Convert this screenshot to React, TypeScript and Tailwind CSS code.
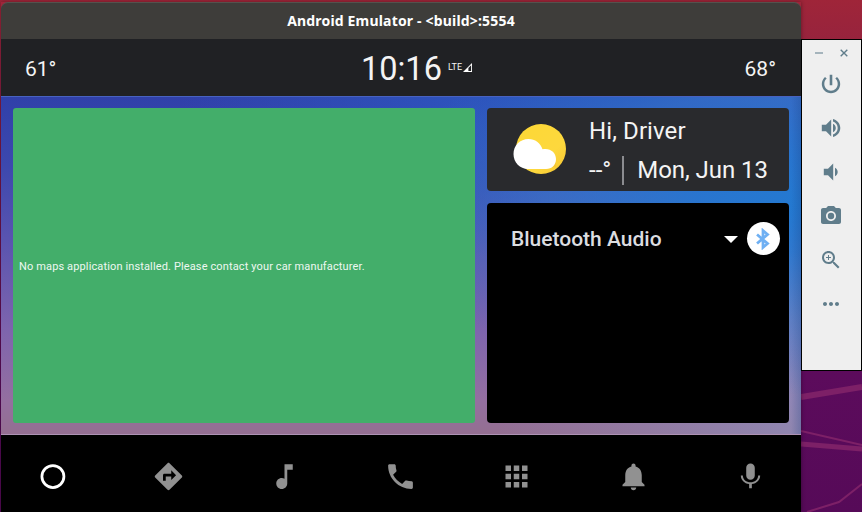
import type { ReactNode } from "react";

function Icon({ d, size = "size-[33px]", children }: { d?: string; size?: string; children?: ReactNode }) {
  return (
    <svg viewBox="0 0 24 24" fill="currentColor" className={`${size} shrink-0`}>
      {d && <path d={d} />}
      {children}
    </svg>
  );
}

const sideIcons = [
  "M13.3 2.8h-2.6v10.4h2.6V2.8zm4.7 2.1l-1.7 1.7C17.8 7.86 18.7 9.81 18.7 12c0 3.7-3 6.7-6.7 6.7s-6.7-3-6.7-6.7c0-2.19.9-4.14 2.4-5.4L6 4.9C4.06 6.6 2.8 9.26 2.8 12c0 5.08 4.12 9.2 9.2 9.2s9.2-4.12 9.2-9.2c0-2.74-1.26-5.4-3.2-7.1z",
  "M2.8 8.7v6.6h4.2l5.2 5.2V3.5L7 8.7H2.8zm14 3.3c0-1.77-1.02-3.29-2.8-4.3v8.6c1.78-1 2.8-2.5 2.8-4.3zM14 3v2.5c2.89.86 4.7 3.4 4.7 6.5s-1.81 5.64-4.7 6.5V21c4.2-1 7.3-4.6 7.3-9s-3.1-8-7.3-9z",
  "M18.7 12c0-1.77-1.02-3.29-2.7-4.2v8.4c1.68-.9 2.7-2.43 2.7-4.2zM4.8 8.8v6.4H9l5.2 5.2V3.6L9 8.8H4.8z",
  "M12 8.8a3.2 3.2 0 1 0 0 6.4 3.2 3.2 0 0 0 0-6.4zM9 2L7.17 4H4c-1.1 0-2 .9-2 2v12c0 1.1.9 2 2 2h16c1.1 0 2-.9 2-2V6c0-1.1-.9-2-2-2h-3.17L15 2H9zm3 15c-2.76 0-5-2.24-5-5s2.24-5 5-5 5 2.24 5 5-2.24 5-5 5z",
  "M15.5 14h-.79l-.28-.27C15.41 12.59 16 11.11 16 9.5 16 5.91 13.09 3 9.5 3S3 5.91 3 9.5 5.91 16 9.5 16c1.61 0 3.09-.59 4.23-1.57l.27.28v.79l5 4.99L20.49 19l-4.99-5zm-6 0C7.01 14 5 11.99 5 9.5S7.01 5 9.5 5 14 7.01 14 9.5 11.99 14 9.5 14zm2.5-5h-2V7H9v2H7v1h2v2h1v-2h2z",
  "M6 10c-1.1 0-2 .9-2 2s.9 2 2 2 2-.9 2-2-.9-2-2-2zm12 0c-1.1 0-2 .9-2 2s.9 2 2 2 2-.9 2-2-.9-2-2-2zm-6 0c-1.1 0-2 .9-2 2s.9 2 2 2 2-.9 2-2-.9-2-2-2z",
];

const navIcons = [
  "M21.71 11.29l-9-9c-.39-.39-1.02-.39-1.41 0l-9 9c-.39.39-.39 1.02 0 1.41l9 9c.39.39 1.02.39 1.41 0l9-9c.39-.38.39-1.01 0-1.41zM14 14.5V12h-4v3H8v-4c0-.55.45-1 1-1h5V7.5l3.5 3.5-3.5 3.5z",
  "M12 3v10.55c-.59-.34-1.27-.55-2-.55-2.21 0-4 1.79-4 4s1.79 4 4 4 4-1.79 4-4V7h4V3h-6z",
  "M6.62 10.79c1.44 2.83 3.76 5.14 6.59 6.59l2.2-2.2c.27-.27.67-.36 1.02-.24 1.12.37 2.33.57 3.57.57.55 0 1 .45 1 1V20c0 .55-.45 1-1 1-9.39 0-17-7.61-17-17 0-.55.45-1 1-1h3.5c.55 0 1 .45 1 1 0 1.25.2 2.45.57 3.57.11.35.03.74-.25 1.02l-2.2 2.2z",
  "M4 8h4V4H4v4zm6 12h4v-4h-4v4zm-6 0h4v-4H4v4zm0-6h4v-4H4v4zm6 0h4v-4h-4v4zm6-10v4h4V4h-4zm-6 4h4V4h-4v4zm6 6h4v-4h-4v4zm0 6h4v-4h-4v4z",
  "M12 22c1.1 0 2-.9 2-2h-4c0 1.1.89 2 2 2zm6-6v-5c0-3.07-1.64-5.64-4.5-6.32V4c0-.83-.67-1.5-1.5-1.5s-1.5.67-1.5 1.5v.68C7.63 5.36 6 7.92 6 11v5l-2 2v1h16v-1l-2-2z",
  "M12 14.8c2.1 0 3.8-1.6 3.8-3.8V4.2c0-2.1-1.7-3.7-3.8-3.7S8.2 2.1 8.2 4.2V11c0 2.2 1.7 3.8 3.8 3.8zm6.8-3.8c0 3.6-3.1 6.1-6.8 6.1S5.2 14.6 5.2 11H3.4c0 4.1 3.3 7.1 7.4 7.7V22.5h2.4v-3.8c4.1-.6 7.4-3.6 7.4-7.7z",
];

const navSizes = [
  "size-[33px]",
  "size-[33px] -translate-x-px",
  "size-[33px] -translate-x-px",
  "size-[33px] -translate-x-px",
  "size-[33px] -translate-x-px",
  "ml-[3px] mr-0.5 size-[27px]",
];

function TitleBar() {
  return (
    <div className="flex h-[37px] items-center justify-center rounded-t-[7px] border-t border-[#54524d] bg-[#3e3d3a]">
      <span className="whitespace-nowrap font-['Noto_Sans','Open_Sans',sans-serif] text-sm font-bold tracking-[0.18px] text-white">
        Android Emulator - &lt;build&gt;:5554
      </span>
    </div>
  );
}

function StatusBar() {
  return (
    <div className="grid h-[57px] grid-cols-[1fr_auto_1fr] items-center bg-[#202124] pl-6 pr-[25px] pt-[3px] text-[21px] text-[#f4f4f4]">
      <span className="pt-0.5">61°</span>
      <div className="flex items-center pl-8">
        <span className="pt-px text-[32.5px] leading-none">10:16</span>
        <span className="mb-[3px] ml-[6px] text-[9px]">LTE</span>
        <svg viewBox="0 0 10 10" className="mb-[3px] ml-px size-[9px]">
          <path d="M0 10 10 0V10Z" fill="white" />
          <path d="M6 5.5 9 2.5V9H6Z" fill="#202124" />
        </svg>
      </div>
      <span className="pt-0.5 text-right">68°</span>
    </div>
  );
}

function WeatherCard() {
  return (
    <section className="flex h-[83px] rounded bg-[#292a2d] pl-[25px] text-2xl text-[#f4f4f4]">
      <svg viewBox="0 0 56 56" className="mt-[13px] size-14 shrink-0">
        <defs>
          <linearGradient id="sun" x1="0" y1="0" x2="1" y2="1">
            <stop offset="0" stopColor="#fdd835" />
            <stop offset="0.65" stopColor="#fdd83d" />
            <stop offset="1" stopColor="#f6c532" />
          </linearGradient>
        </defs>
        <circle cx="29" cy="28" r="25" fill="url(#sun)" />
        <path d="M44 46 33 47 43 34Z" fill="#efbd2e" opacity=".45" />
        <path
          d="M16.5 18C23 18 28.5 22 30.5 28.3 37.5 26.5 44 31 44 38 44 44 40 48 34 48H16C8 48 1.5 41.5 1.5 33 1.5 24.5 8 18 16.5 18Z"
          fill="white"
        />
      </svg>
      <div className="ml-[21px] flex flex-col whitespace-nowrap">
        <span className="mt-[5px] h-[37px] leading-9 tracking-[0.1px]">Hi, Driver</span>
        <div className="flex h-10 items-center">
          <span>--°</span>
          <span className="ml-[11px] mr-[13px] h-[29px] w-0.5 bg-[#8b8c90]" />
          <span className="tracking-[-0.05px]">Mon, Jun 13</span>
        </div>
      </div>
    </section>
  );
}

function AudioCard() {
  return (
    <section className="h-[220px] rounded bg-black">
      <div className="flex items-center pl-6 pr-[9px] pt-[19px]">
        <span className="flex-1 pt-0.5 text-[21px] font-medium text-[#dcdde0]">Bluetooth Audio</span>
        <svg viewBox="0 0 14 7" className="mr-[9px] mt-px h-[7px] w-3.5">
          <path d="M0 0h14L7 7Z" fill="white" />
        </svg>
        <div className="flex size-[33px] items-center justify-center rounded-full bg-white text-[#6fb0f3]">
          <svg viewBox="0 0 24 24" fill="none" stroke="currentColor" strokeWidth="3" className="mr-px h-[22px] w-6">
            <path d="M5.5 7 17 17l-5 4.2V2.8L17 7 5.5 17" />
          </svg>
        </div>
      </div>
    </section>
  );
}

function NavBar() {
  return (
    <nav className="flex h-[77px] items-center justify-between bg-black px-[35px] pt-[6px] text-[#919191]">
      <Icon>
        <circle cx="12.3" cy="12" r="8" fill="none" stroke="white" strokeWidth="2" />
      </Icon>
      {navIcons.map((d, i) => (
        <Icon key={d} d={d} size={navSizes[i]} />
      ))}
    </nav>
  );
}

function SidePanel() {
  return (
    <aside className="mt-[39px] h-[332px] w-[61px] border border-black bg-[#efefef] text-[#607d8b]">
      <div className="flex h-[25px] items-center justify-end gap-[17px] pr-[13px]">
        <span className="h-[2px] w-2 bg-[#a5b4bc]" />
        <svg viewBox="0 0 8 8" className="size-2" stroke="currentColor" strokeWidth="1.4">
          <path d="M.7.7l6.6 6.6M7.3.7.7 7.3" />
        </svg>
      </div>
      <div className="flex flex-col items-start gap-5 pl-[17px] pt-[7px]">
        {sideIcons.map((d) => (
          <Icon key={d} d={d} size="size-6" />
        ))}
      </div>
    </aside>
  );
}

export default function App() {
  return (
    <div className="relative isolate flex h-[512px] w-[862px] overflow-hidden bg-[linear-gradient(180deg,#9f2539_0%,#97233d_8%,#70134b_40%,#5c0b5c_73%,#560a58_100%)] font-['Roboto',sans-serif]">
      <svg viewBox="0 0 61 141" className="absolute bottom-0 right-0 -z-10 h-[141px] w-[61px]" fill="none" stroke="#7d2067">
        <path d="M0 26 61 16" strokeWidth="6" />
        <path d="M0 73 61 78" strokeWidth="5" />
        <path d="M0 60 61 74M6 141 38 131 61 113" strokeWidth="2" />
      </svg>
      <div className="ml-px mt-0.5 flex w-[800px] shrink-0 flex-col shadow-[0_0_4px_#0006]">
        <TitleBar />
        <StatusBar />
        <main className="flex h-[339px] gap-3 border-b border-t border-b-[#ae92b4] border-t-[#4862c0] bg-[linear-gradient(270deg,#1a3f8044_0px,#1a3f8000_10px),radial-gradient(ellipse_420px_190px_at_100%_32%,#2379d1_0%,#2578d1dd_25%,#3a7dcd88_60%,#5a85c800_100%),radial-gradient(ellipse_460px_170px_at_80%_0%,#2450bc_0%,#2d55bedd_40%,#5a66c000_100%),linear-gradient(90deg,#8090c000_62%,#8d96c499_100%),linear-gradient(180deg,#3040a9_0%,#3c48ae_20%,#5954b0_42%,#7f65ad_70%,#946fa0_90%,#946f91_100%)] px-3 pb-[11px] pt-[11px]">
          <section className="flex w-[462px] items-center rounded-[3px] bg-[#43ae6a] pl-1.5 pt-[3px] text-[11px] tracking-[0.13px] text-[#eef8f1]">
            No maps application installed. Please contact your car manufacturer.
          </section>
          <div className="flex w-[302px] flex-col gap-3">
            <WeatherCard />
            <AudioCard />
          </div>
        </main>
        <NavBar />
      </div>
      <SidePanel />
    </div>
  );
}
